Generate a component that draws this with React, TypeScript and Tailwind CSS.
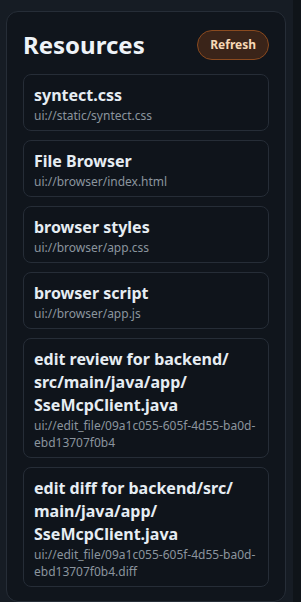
import React from "react";

const resources = [
  { name: "syntect.css", uri: "ui://static/syntect.css" },
  { name: "File Browser", uri: "ui://browser/index.html" },
  { name: "browser styles", uri: "ui://browser/app.css" },
  { name: "browser script", uri: "ui://browser/app.js" },
  {
    name: "edit review for backend/src/main/java/app/SseMcpClient.java",
    uri: "ui://edit_file/09a1c055-605f-4d55-ba0d-ebd13707f0b4",
  },
  {
    name: "edit diff for backend/src/main/java/app/SseMcpClient.java",
    uri: "ui://edit_file/09a1c055-605f-4d55-ba0d-ebd13707f0b4.diff",
  },
];

// allow line breaks right after each slash in long paths
const withSlashBreaks = (text: string) =>
  text.split("/").map((part, i, arr) => (
    <React.Fragment key={i}>
      {part}
      {i < arr.length - 1 && (
        <>
          /<wbr />
        </>
      )}
    </React.Fragment>
  ));

const ResourceCard = ({ name, uri }: { name: string; uri: string }) => (
  <div className="rounded-lg border border-[#262d37] bg-[#0f141b] px-2.5 pt-[9px] pb-[6px]">
    <div className="text-[16px] font-bold leading-[23px] text-[#e6edf3]">{withSlashBreaks(name)}</div>
    <div className="text-[12px] leading-[17px] text-[#8b949e] break-all">{uri}</div>
  </div>
);

export default function App() {
  return (
    <div
      className="flex h-[602px] w-[301px] overflow-hidden bg-[#161c24]"
      style={{ fontFamily: '"Noto Sans", "Open Sans", sans-serif' }}
    >
      <div className="w-[293px] shrink-0 pl-[6px] pt-[11px] pr-[7px]">
        <div className="h-[591px] overflow-hidden rounded-xl border border-[#262d37] bg-[#10151c] px-4 pt-[17px]">
          <div className="flex items-center justify-between">
            <h2 className="text-[24px] font-bold leading-8 text-[#eef3f8]">Resources</h2>
            <button className="h-[30px] rounded-full border border-[#8a4a1f] bg-[#3a2419] px-3 text-[12px] font-bold text-[#f6d8b6]">
              Refresh
            </button>
          </div>
          <div className="mt-[13px] flex flex-col gap-[9px]">
            {resources.map((r) => (
              <ResourceCard key={r.uri} name={r.name} uri={r.uri} />
            ))}
          </div>
        </div>
      </div>
      <div className="flex-1 bg-[#0f1419]" />
    </div>
  );
}
